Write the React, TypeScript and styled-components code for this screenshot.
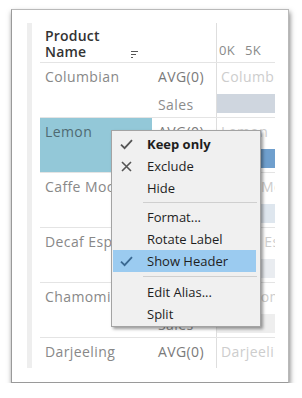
import React from "react";
import styled, { createGlobalStyle } from "styled-components";

const Global = createGlobalStyle`
  html, body { margin: 0; padding: 0; background: #ffffff; }
  body { font-family: "Open Sans", "Noto Sans", sans-serif; }
`;

const Page = styled.div`
  padding: 9px 0 0 11px;
`;

const Frame = styled.div`
  position: relative;
  box-sizing: border-box;
  width: 278px;
  height: 374px;
  background: #fff;
  border: 1px solid #b9b9b9;
  border-left-color: #9a9a9a;
  border-bottom-color: #9a9a9a;
  box-shadow: 1px 3px 5px rgba(0, 0, 0, 0.5);
  display: flex;
  padding: 13px 0 0 15px;
  overflow: visible;
`;

const Stripe = styled.div`
  width: 5px;
  height: 345px;
  background: #eeeeee;
  margin-right: 8px;
  flex: none;
`;

const Table = styled.div`
  width: 235px;
  display: flex;
  flex-direction: column;
  height: 345px;
  overflow: hidden;
  letter-spacing: 0.4px;
`;

const Row = styled.div<{ $h: number; $last?: boolean }>`
  display: grid;
  grid-template-columns: 112px 64px 59px;
  height: ${(p) => p.$h}px;
  box-sizing: border-box;
  border-bottom: ${(p) => (p.$last ? "none" : "1px solid #e4e4e4")};
  flex: none;
`;

const HeaderName = styled.div`
  display: flex;
  align-items: flex-end;
  padding: 5px 0 0 5px;
`;

const HeaderText = styled.div`
  width: 86px;
  font-size: 14px;
  font-weight: 600;
  line-height: 16px;
  color: #333;
  padding-bottom: 2px;
  letter-spacing: 0.2px;
`;

const SortIcon = styled.svg`
  width: 8px;
  height: 7px;
  margin-bottom: 4px;
`;

const Axis = styled.div`
  grid-column: 3;
  border-left: 1px solid #dedede;
  font-size: 13px;
  color: #8a8a8a;
  padding: 18px 0 0 2px;
  word-spacing: 6px;
  line-height: 18px;
`;

const NameCell = styled.div<{ $sel?: boolean }>`
  font-size: 14px;
  line-height: 18px;
  padding: 5px 0 0 5px;
  color: ${(p) => (p.$sel ? "#4f6a72" : "#888")};
  background: ${(p) => (p.$sel ? "#93c8d8" : "transparent")};
  white-space: nowrap;
  overflow: hidden;
`;

const MeasureCell = styled.div`
  display: flex;
  flex-direction: column;
  gap: 10px;
  padding: 5px 0 0 6px;
  font-size: 14px;
  line-height: 18px;
  color: #7c7c7c;
  white-space: nowrap;
  overflow: hidden;
`;

const MeasureLabel = styled.span<{ $light?: boolean }>`
  color: ${(p) => (p.$light ? "#8c8c8c" : "#7a7a7a")};
`;

const BarCell = styled.div`
  border-left: 1px solid #dedede;
  display: flex;
  flex-direction: column;
  padding-top: 5px;
  overflow: hidden;
`;

const BarLabel = styled.div`
  font-size: 14px;
  line-height: 18px;
  color: #cdcdcd;
  padding-left: 4px;
  white-space: nowrap;
`;

const Bar = styled.div<{ $c: string }>`
  margin-top: 8px;
  height: 19px;
  background: ${(p) => p.$c};
`;

const Menu = styled.div`
  position: absolute;
  left: 99px;
  top: 120px;
  width: 150px;
  box-sizing: border-box;
  background: #f0f0f0;
  border: 1px solid #a3a3a3;
  box-shadow: 2px 2px 3px rgba(0, 0, 0, 0.4);
  padding: 2px 0 1px 1px;
  font-family: "Open Sans", "Noto Sans", sans-serif;
  font-size: 13px;
  color: #1e1e1e;
`;

const Item = styled.div<{ $active?: boolean; $bold?: boolean }>`
  display: flex;
  align-items: center;
  height: 22px;
  margin-right: 4px;
  background: ${(p) => (p.$active ? "#9bcbf0" : "transparent")};
  font-weight: ${(p) => (p.$bold ? 700 : 400)};
`;

const IconBox = styled.span<{ $active?: boolean }>`
  width: 26px;
  margin-right: 8px;
  display: flex;
  justify-content: center;
  align-items: center;
  color: ${(p) => (p.$active ? "#3a6891" : "#555")};
`;

const Separator = styled.div<{ $gap: number }>`
  height: 1px;
  background: #cfcfcf;
  margin: ${(p) => p.$gap}px 3px ${(p) => p.$gap}px 30px;
`;

const Check = () => (
  <svg width="13" height="11" viewBox="0 0 13 11">
    <path d="M1 5.6 L4.6 9.2 L12 1.2" fill="none" stroke="currentColor" strokeWidth="1.8" />
  </svg>
);

const Cross = () => (
  <svg width="11" height="11" viewBox="0 0 11 11">
    <path d="M1 1 L10 10 M10 1 L1 10" fill="none" stroke="currentColor" strokeWidth="1.6" />
  </svg>
);

type RowData = { name: string; bar?: string; sel?: boolean; last?: boolean };

const rows: RowData[] = [
  { name: "Columbian", bar: "#cfd6df" },
  { name: "Lemon", bar: "#6f9fcd", sel: true },
  { name: "Caffe Mocha", bar: "#dee6ee" },
  { name: "Decaf Espresso", bar: "#e9ecf0" },
  { name: "Chamomile", bar: "#eeeeee" },
  { name: "Darjeeling", last: true },
];

type MenuEntry =
  | { sep: true; gap: number }
  | { label: string; icon?: "check" | "cross"; bold?: boolean; active?: boolean };

const menu: MenuEntry[] = [
  { label: "Keep only", icon: "check", bold: true },
  { label: "Exclude", icon: "cross" },
  { label: "Hide" },
  { sep: true, gap: 3 },
  { label: "Format..." },
  { label: "Rotate Label" },
  { label: "Show Header", icon: "check", active: true },
  { sep: true, gap: 4 },
  { label: "Edit Alias..." },
  { label: "Split" },
];

export default function App() {
  return (
    <Page>
      <Global />
      <Frame>
        <Stripe />
        <Table>
          <Row $h={40}>
            <HeaderName>
              <HeaderText>Product Name</HeaderText>
              <SortIcon viewBox="0 0 8 7">
                <path d="M0 0.5 H7 M0 3.5 H5 M0 6.5 H2" stroke="#555" strokeWidth="1" />
              </SortIcon>
            </HeaderName>
            <div />
            <Axis>0K 5K</Axis>
          </Row>
          {rows.map((r) => (
            <Row key={r.name} $h={r.last ? 30 : 55} $last={r.last}>
              <NameCell $sel={r.sel}>{r.name}</NameCell>
              <MeasureCell>
                <MeasureLabel>AVG(0)</MeasureLabel>
                {!r.last && <MeasureLabel $light>Sales</MeasureLabel>}
              </MeasureCell>
              <BarCell>
                <BarLabel>{r.name}</BarLabel>
                {r.bar && <Bar $c={r.bar} />}
              </BarCell>
            </Row>
          ))}
        </Table>
        <Menu>
          {menu.map((m, i) =>
            "sep" in m ? (
              <Separator key={i} $gap={m.gap} />
            ) : (
              <Item key={i} $active={m.active} $bold={m.bold}>
                <IconBox $active={m.active}>
                  {m.icon === "check" && <Check />}
                  {m.icon === "cross" && <Cross />}
                </IconBox>
                {m.label}
              </Item>
            )
          )}
        </Menu>
      </Frame>
    </Page>
  );
}
